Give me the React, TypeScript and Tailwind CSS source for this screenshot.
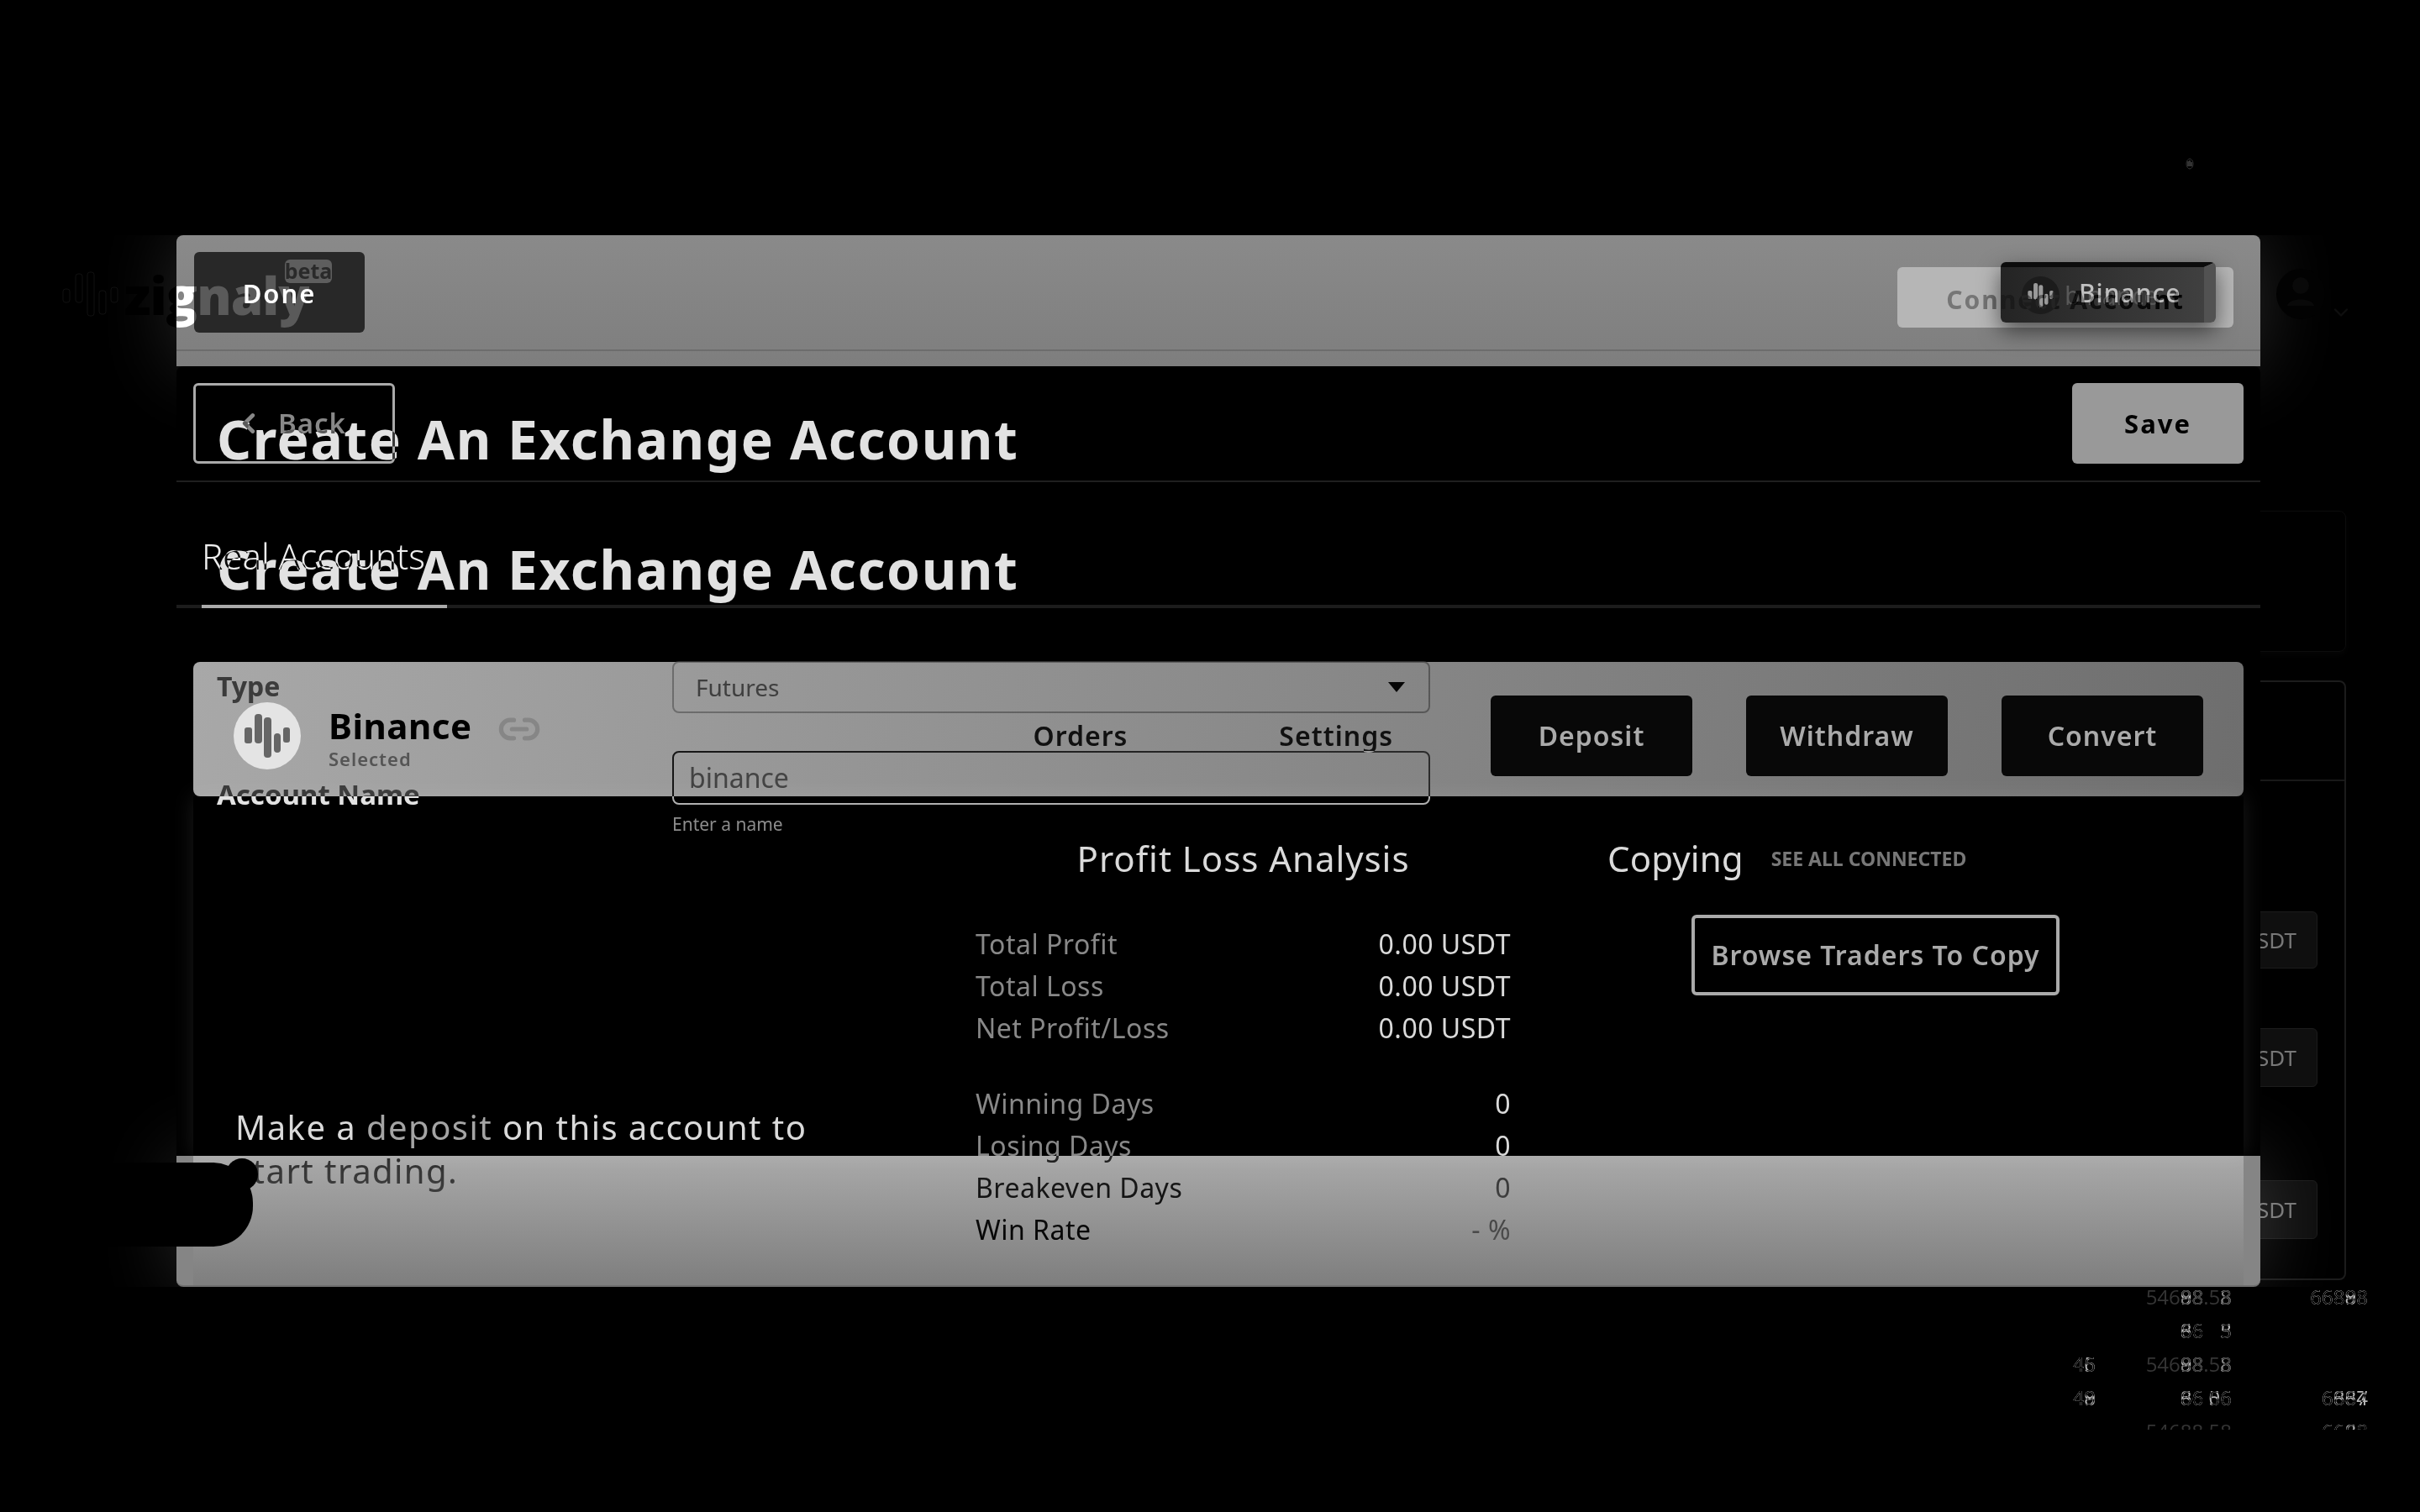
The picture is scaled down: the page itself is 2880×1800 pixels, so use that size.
import { ChevronDown, ChevronLeft, Link2 } from 'lucide-react';

const PROFIT_ROWS = [
  { label: 'Total Profit', value: '0.00 USDT' },
  { label: 'Total Loss', value: '0.00 USDT' },
  { label: 'Net Profit/Loss', value: '0.00 USDT' },
];

const DAY_ROWS = [
  { label: 'Winning Days', value: '0' },
  { label: 'Losing Days', value: '0' },
  { label: 'Breakeven Days', value: '0' },
  { label: 'Win Rate', value: '- %' },
];

const PRICE = '54688.58';

const TICKER_ROWS = [
  { leftA: '', leftB: '', showPrice: true, a: '   88  8', b: '   98  3', rightA: '66888', rightB: '66898' },
  { leftA: '', leftB: '', showPrice: false, a: '   66  5', b: '   86  3', rightA: '', rightB: '' },
  { leftA: '45', leftB: '46', showPrice: true, a: '   88  8', b: '   98  3', rightA: '', rightB: '' },
  { leftA: '49', leftB: '48', showPrice: false, a: '   66 56', b: '   86 06', rightA: '6667', rightB: '6884' },
  { leftA: '', leftB: '', showPrice: true, a: '', b: '', rightA: '6668', rightB: '6688' },
];

function BarsLogo({ size, bg, bar }: { size: number; bg: string; bar: string }) {
  return (
    <svg width={size} height={size} viewBox="0 0 80 80" className="shrink-0">
      <circle cx="40" cy="40" r="40" fill={bg} />
      <rect x="13" y="30" width="9" height="19" rx="3" fill={bar} />
      <rect x="25" y="14" width="9" height="35" rx="4" fill={bar} />
      <rect x="36" y="18" width="9" height="48" rx="4" fill={bar} />
      <rect x="48" y="37" width="8" height="23" rx="4" fill={bar} />
      <rect x="59" y="30" width="8" height="18" rx="3" fill={bar} />
    </svg>
  );
}

function Masked({ text, shape }: { text: string; shape: string }) {
  return (
    <span className="absolute right-0 top-0 whitespace-pre text-[#b8b8b8] mix-blend-difference">
      {text.split('').map((ch, i) =>
        ch === ' ' ? (
          <span key={i} className="invisible">{shape[i] ?? '8'}</span>
        ) : (
          <span key={i}>{ch}</span>
        ),
      )}
    </span>
  );
}

function GhostCell({ price, showPrice, a, b }: { price?: string; showPrice?: boolean; a: string; b: string }) {
  const shape = price ?? a;
  return (
    <div className="relative flex h-10 items-center justify-end">
      <div className="relative h-[32px] text-[#353535]">
        <span className={showPrice ? 'whitespace-pre' : 'invisible whitespace-pre'}>{shape}</span>
        {a && <Masked text={a} shape={shape} />}
        {b && <Masked text={b} shape={shape} />}
      </div>
    </div>
  );
}

function BackgroundCards() {
  return (
    <div className="absolute left-[2400px] top-[608px] flex w-[392px] flex-col">
      <div className="h-[168px] rounded-lg border border-[#0c0c0c] shadow-[0_4px_6px_rgba(255,255,255,0.02)]" />
      <div className="mt-[34px] flex h-[714px] flex-col rounded-lg border-2 border-[#1c1c1c]">
        <div className="h-[118px] border-b-2 border-[#191919]" />
        <div className="flex flex-col items-end pr-[32px] pt-[155px]">
          <div className="flex h-[68px] w-[200px] items-center justify-end rounded-md border border-[#1c1c1c] bg-[#0f0f0f] pr-[24px] text-[26px] text-[#777]">SDT</div>
          <div className="mt-[71px] flex h-[70px] w-[200px] items-center justify-end rounded-md border border-[#1c1c1c] bg-[#0f0f0f] pr-[24px] text-[26px] text-[#777]">SDT</div>
          <div className="mt-[111px] flex h-[70px] w-[200px] items-center justify-end rounded-md border border-[#1c1c1c] bg-[#0f0f0f] pr-[24px] text-[26px] text-[#777]">SDT</div>
        </div>
      </div>
    </div>
  );
}

function TickerTape() {
  return (
    <div className="absolute left-[2400px] top-[1522px] grid h-[180px] w-[418px] grid-cols-[94px_162px_162px] overflow-hidden text-[24px] [font-family:'Open_Sans',sans-serif]">
      {TICKER_ROWS.map((row, i) => (
        <div key={i} className="contents">
          <GhostCell a={row.leftA} b={row.leftB} />
          <GhostCell price={PRICE} showPrice={row.showPrice} a={row.a} b={row.b} />
          <GhostCell a={row.rightA} b={row.rightB} />
        </div>
      ))}
    </div>
  );
}

function TopBand() {
  return (
    <div className="h-[156px] rounded-t-lg bg-[linear-gradient(180deg,#8a8a8a,#7e7e7e)] shadow-[0_0_90px_rgba(255,255,255,0.16)]">
      <div className="flex h-[138px] items-center justify-between border-b-2 border-[#6c6c6c] pl-[21px] pr-[32px]">
        <div className="relative flex h-[96px] w-[203px] items-center justify-center rounded-md bg-[#282828]">
          <div className="absolute left-[108px] top-[9px] z-20 flex h-[28px] w-[56px] items-center justify-center rounded-md bg-[#5e5e5e] text-[25px] font-bold text-[#2a2a2a]">
            beta
          </div>
          <span className="relative z-20 mt-[2px] text-[31px] font-semibold tracking-[2px] text-white">Done</span>
        </div>
        <div className="relative mt-[12px] flex h-[72px] w-[400px] items-center justify-center rounded-md bg-[#b6b6b6]">
          <div className="absolute left-[123px] top-[-6px] flex h-[72px] w-[256px] items-center rounded-md border-r-[14px] border-t-[6px] border-r-[#525252] border-t-[#0c0c0c] bg-[linear-gradient(90deg,#242424,#404040)] pl-[25px] shadow-[0_10px_26px_rgba(0,0,0,0.55)]">
            <BarsLogo size={45} bg="#1c1c1c" bar="#9a9a9a" />
            <div className="relative ml-[6px] text-[30px] text-[#585858]">
              binance
              <span className="absolute left-[17px] top-[-3px] font-medium tracking-[1px] text-[#c0c0c0]">Binance</span>
            </div>
          </div>
          <span className="relative mt-[4px] text-[30px] font-bold tracking-[2px] text-[#404040] mix-blend-difference">
            Connect Account
          </span>
        </div>
      </div>
    </div>
  );
}

function AccountRow() {
  return (
    <div className="mx-[20px] mt-[64px] flex h-[160px] shrink-0 items-center rounded-lg bg-[linear-gradient(100deg,#a8a8a8,#6e6e6e)] pl-[48px] pr-[48px] pt-[16px]">
      <BarsLogo size={80} bg="#e4e4e4" bar="#666666" />
      <div className="ml-[33px] flex flex-col">
        <span className="mt-[4px] text-[42px] font-bold leading-[50px] tracking-[0.5px] text-black">Binance</span>
        <span className="text-[22px] font-semibold leading-[28px] tracking-[1px] text-[#555]">Selected</span>
      </div>
      <Link2 size={52} strokeWidth={2.4} className="ml-[30px] mb-[16px] text-[#868686]" />
      <span className="ml-[586px] text-[32px] font-semibold tracking-[1px] text-[#111]">Orders</span>
      <span className="ml-[180px] text-[32px] font-semibold tracking-[1px] text-[#111]">Settings</span>
      <div className="ml-auto flex gap-[64px]">
        {['Deposit', 'Withdraw', 'Convert'].map(label => (
          <div key={label} className="flex h-[96px] w-[240px] items-center justify-center rounded-md bg-[#080808] text-[32px] font-semibold tracking-[1px] text-[#aaa]">
            {label}
          </div>
        ))}
      </div>
    </div>
  );
}

function MiddleBand() {
  return (
    <div className="relative flex h-[940px] flex-col rounded-t-lg bg-black">
      <div className="flex h-[138px] shrink-0 items-center justify-between border-b-2 border-[#1f1f1f] px-[20px]">
        <div className="flex h-[96px] w-[240px] items-center rounded-md border-[3px] border-[#aaa] pl-[44px] text-[33px] font-semibold tracking-[1px] text-[#888]">
          <ChevronLeft size={38} strokeWidth={3} />
          <span className="ml-[16px]">Back</span>
        </div>
        <div className="flex h-[96px] w-[204px] items-center justify-center rounded-md bg-[#999] text-[31px] font-bold tracking-[2px] text-black">
          Save
        </div>
      </div>
      <div className="flex h-[150px] shrink-0 border-b-4 border-[#1c1c1c]">
        <div className="relative -mb-[4px] ml-[30px] w-[292px] whitespace-nowrap border-b-4 border-[#aaa] pt-[62px] text-[42px] font-light leading-[52px] text-[#eee]">
          Real Accounts
        </div>
      </div>
      <AccountRow />
      <div className="mx-[20px] flex-1 bg-black shadow-[0_0_24px_rgba(255,255,255,0.1)]" />
    </div>
  );
}

function BottomBand() {
  return (
    <div className="h-[156px] rounded-b-lg border-b-2 border-[#6e6e6e] bg-[#858585] shadow-[0_0_90px_rgba(255,255,255,0.16)]">
      <div className="mx-[20px] h-full bg-[linear-gradient(180deg,#a9a9a9,#7e7e7e)]" />
    </div>
  );
}

function FormOverlay() {
  return (
    <div className="pointer-events-none absolute inset-0 flex flex-col pl-[48px] mix-blend-difference">
      <h1 className="mt-[203px] h-[80px] text-[64px] font-bold leading-[80px] tracking-[1.6px] text-[#e2e2e2]">
        Create An Exchange Account
      </h1>
      <h1 className="mt-[75px] h-[80px] text-[64px] font-bold leading-[80px] tracking-[1.6px] text-[#e2e2e2]">
        Create An Exchange Account
      </h1>
      <div className="mt-[69px] grid grid-cols-[542px_902px] gap-y-[45px]">
        <div className="pt-[8px] text-[32px] font-bold leading-[44px] text-[#e2e2e2]">Type</div>
        <div className="flex h-[62px] items-center justify-between rounded-lg border-2 border-[#2e2e2e] pl-[26px] pr-[28px] text-[28px] text-[#d8d8d8]">
          Futures
          <svg width="20" height="12" viewBox="0 0 20 12"><polygon points="0,0 20,0 10,12" fill="#8c8c8c" /></svg>
        </div>
        <div className="pt-[30px] text-[33px] font-bold leading-[44px] text-[#e2e2e2]">Account Name</div>
        <div>
          <div className="flex h-[64px] items-center rounded-lg border-2 border-[#b0b0b0] pl-[18px] text-[32px] text-[#dcdcdc]">binance</div>
          <div className="mt-[8px] text-[21px] leading-[30px] text-[#8c8c8c]">Enter a name</div>
        </div>
      </div>
      <div className="mt-[3px] flex">
        <div className="w-[903px] pl-[22px] pt-[317px] text-[40px] leading-[52px] tracking-[1.45px] text-[#dadada]">
          <p className="w-[700px]">
            Make a <span className="text-[#a4a4a4]">deposit</span> on this account to start trading.
          </p>
        </div>
        <div className="w-[637px]">
          <div className="h-[46px] text-center text-[42px] leading-[46px] tracking-[0.95px] text-[#dadada]">Profit Loss Analysis</div>
          <div className="mt-[54px]">
            {PROFIT_ROWS.map(row => (
              <div key={row.label} className="flex h-[50px] items-center justify-between text-[32px] tracking-[0.5px]">
                <span className="text-[#888]">{row.label}</span>
                <span className="text-[#dadada]">{row.value}</span>
              </div>
            ))}
          </div>
          <div className="mt-[40px]">
            {DAY_ROWS.map(row => (
              <div key={row.label} className="flex h-[50px] items-center justify-between text-[32px] tracking-[0.5px]">
                <span className="text-[#888]">{row.label}</span>
                <span className="text-[#dadada]">{row.value}</span>
              </div>
            ))}
          </div>
        </div>
        <div className="ml-[115px]">
          <div className="flex h-[46px] items-center">
            <span className="text-[42px] leading-[46px] tracking-[0.1px] text-[#dadada]">Copying</span>
            <span className="ml-[33px] text-[23px] font-bold text-[#777]">SEE ALL CONNECTED</span>
          </div>
          <div className="ml-[100px] mt-[44px] flex h-[96px] w-[438px] items-center justify-center rounded-md border-4 border-[#aaa] text-[32px] font-semibold tracking-[1px] text-[#aaa]">
            Browse Traders To Copy
          </div>
        </div>
      </div>
    </div>
  );
}

export default function App() {
  return (
    <div className="relative h-[1800px] w-[2880px] overflow-hidden bg-black [font-family:'Noto_Sans',sans-serif]">
      <BackgroundCards />
      <TickerTape />

      {/* tiny mark top right */}
      <svg width="10" height="14" viewBox="0 0 10 14" className="absolute left-[2601px] top-[188px]">
        <ellipse cx="5" cy="7" rx="4" ry="6" fill="none" stroke="#333" />
        <path d="M3 4v6M5 3v7M7 5v5" stroke="#666" />
      </svg>

      <div className="relative mt-[280px] h-[1252px] overflow-hidden px-[210px]">
        <div className="relative h-[1252px] w-[2480px]">
          <TopBand />
          <MiddleBand />
          <BottomBand />
          <FormOverlay />

          {/* chat bubble */}
          <div className="absolute left-[-210px] top-[1104px] h-[100px] w-[301px] rounded-r-[48px] bg-black" />
          <div className="absolute left-[59px] top-[1099px] h-[38px] w-[38px] rounded-full bg-black" />
        </div>

        {/* logo runs across the page edge */}
        <svg width="70" height="64" viewBox="0 0 70 64" className="absolute left-[74px] top-[36px]" fill="none" stroke="#101010">
          <rect x="1" y="28" width="8" height="16" rx="3" />
          <rect x="16" y="10" width="8" height="34" rx="3" />
          <rect x="30" y="8" width="8" height="52" rx="3" />
          <rect x="44" y="30" width="8" height="28" rx="3" />
          <rect x="58" y="26" width="8" height="18" rx="3" />
        </svg>
        <div className="absolute left-[148px] top-[26px] z-10 bg-[linear-gradient(90deg,#000_0,#000_62px,#fff_62px,#fff_83px,#5a5a5a_83px)] bg-clip-text text-[62px] font-extrabold leading-[90px] tracking-[-1px] text-transparent [font-family:'Open_Sans',sans-serif]">
          zignaly
        </div>

        {/* profile */}
        <svg width="60" height="64" viewBox="0 0 60 64" className="absolute left-[2708px] top-[38px]">
          <ellipse cx="30" cy="32" rx="29" ry="30" fill="#020202" />
          <circle cx="30" cy="22" r="10" fill="#090909" />
          <path d="M14 46c2-10 30-10 32 0z" fill="#090909" />
        </svg>
        <ChevronDown size={28} className="absolute left-[2772px] top-[78px] text-[#0e0e0e]" />
      </div>
    </div>
  );
}
